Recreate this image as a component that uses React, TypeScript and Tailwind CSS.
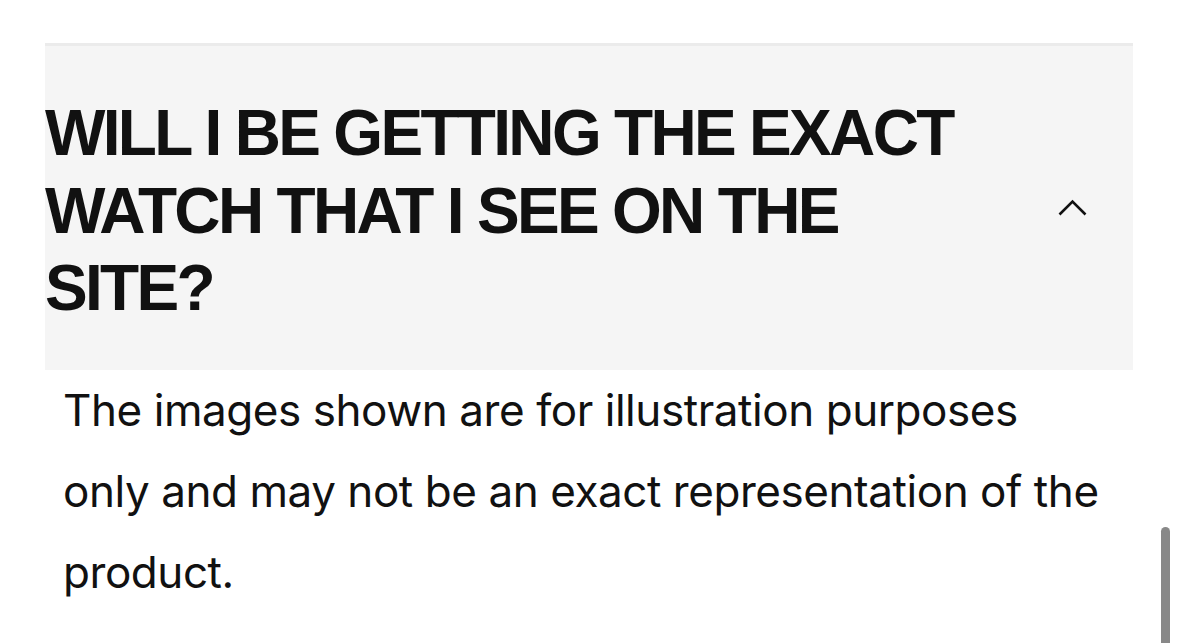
import React from "react";

export default function App() {
  return (
    <div className="relative w-[1179px] h-[643px] overflow-hidden bg-white" style={{ fontFamily: "Inter, 'Noto Sans', sans-serif" }}>
      <div className="h-[43px]" />
      <div className="mx-[45px] w-[1088px] bg-[#f5f5f5] border-t-[3px] border-[#ebebeb] flex items-center">
        <h2
          className="w-[958px] pt-[49px] pb-[42px] text-[64px] leading-[77.5px] font-bold tracking-[-0.042em] text-[#111111] uppercase"
          style={{ fontFamily: "'Liberation Sans', Arial, sans-serif" }}
        >
          Will I be getting the exact watch that I see on the site?
        </h2>
        <div className="flex-1 flex justify-end pr-[46px]">
          <svg width="29" height="17" viewBox="0 0 29 17" fill="none">
            <path d="M1.5 15.5L14.5 2.5L27.5 15.5" stroke="#111111" strokeWidth="2.6" />
          </svg>
        </div>
      </div>
      <p className="ml-[63px] w-[1040px] text-[44px] leading-[81px] tracking-[-0.01em] text-[#111111]">
        The images shown are for illustration purposes only and may not be an exact representation of the product.
      </p>
      <div className="absolute left-[1161px] top-[527px] w-[9px] h-[140px] rounded-full bg-[#888888]" />
    </div>
  );
}
